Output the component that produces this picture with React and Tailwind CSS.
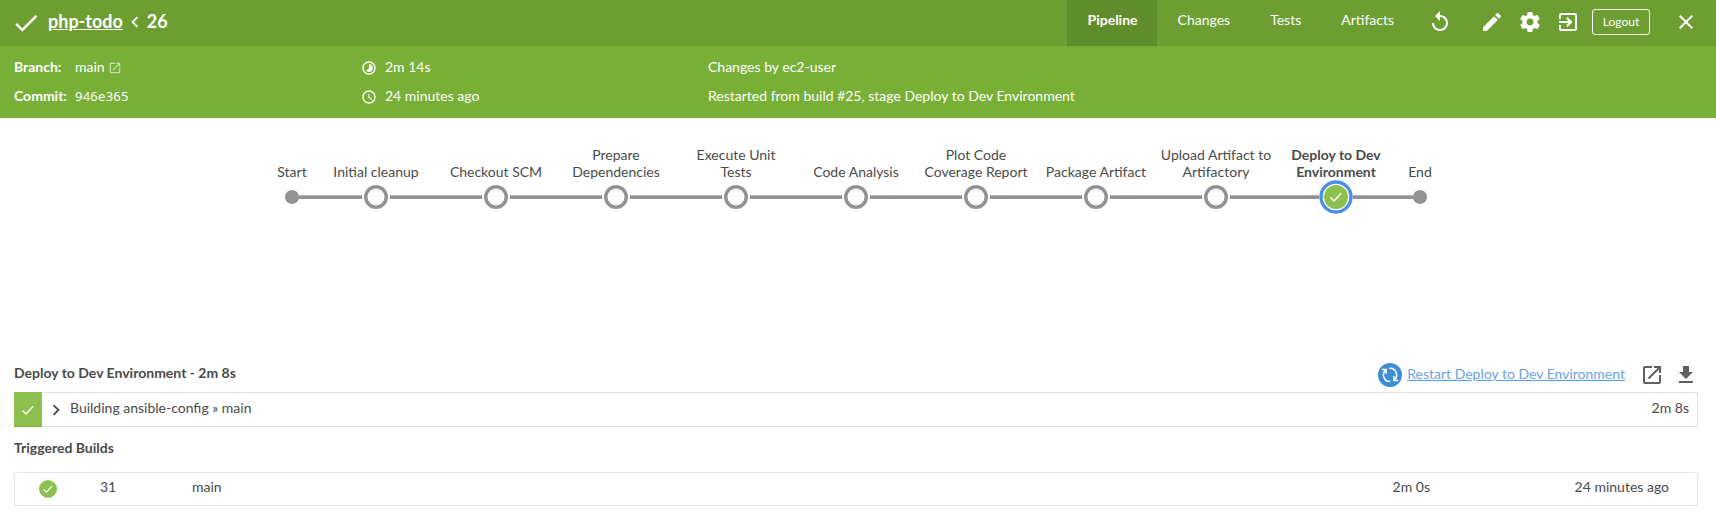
const ICONS = {
  replay: 'M12 5V1L7 6l5 5V7c3.31 0 6 2.69 6 6s-2.69 6-6 6-6-2.69-6-6H4c0 4.42 3.58 8 8 8s8-3.58 8-8-3.58-8-8-8z',
  edit: 'M3 17.25V21h3.75L17.81 9.94l-3.75-3.75L3 17.25zM20.71 7.04c.39-.39.39-1.02 0-1.41l-2.34-2.34c-.39-.39-1.02-.39-1.41 0l-1.83 1.83 3.75 3.75 1.83-1.83z',
  settings: 'M19.43 12.98c.04-.32.07-.64.07-.98s-.03-.66-.07-.98l2.11-1.65c.19-.15.24-.42.12-.64l-2-3.46c-.12-.22-.39-.3-.61-.22l-2.49 1c-.52-.4-1.08-.73-1.69-.98l-.38-2.65C14.46 2.18 14.25 2 14 2h-4c-.25 0-.46.18-.49.42l-.38 2.65c-.61.25-1.17.59-1.69.98l-2.49-1c-.23-.09-.49 0-.61.22l-2 3.46c-.13.22-.07.49.12.64l2.11 1.65c-.04.32-.07.65-.07.98s.03.66.07.98l-2.11 1.65c-.19.15-.24.42-.12.64l2 3.46c.12.22.39.3.61.22l2.49-1c.52.4 1.08.73 1.69.98l.38 2.65c.03.24.24.42.49.42h4c.25 0 .46-.18.49-.42l.38-2.65c.61-.25 1.17-.59 1.69-.98l2.49 1c.23.09.49 0 .61-.22l2-3.46c.12-.22.07-.49-.12-.64l-2.11-1.65zM12 15.5c-1.93 0-3.5-1.57-3.5-3.5s1.57-3.5 3.5-3.5 3.5 1.57 3.5 3.5-1.57 3.5-3.5 3.5z',
  exit: 'M10.09 15.59L11.5 17l5-5-5-5-1.41 1.41L12.67 11H3v2h9.67l-2.58 2.59zM19 3H5c-1.11 0-2 .9-2 2v4h2V5h14v14H5v-4H3v4c0 1.1.89 2 2 2h14c1.1 0 2-.9 2-2V5c0-1.1-.9-2-2-2z',
  close: 'M19 6.41L17.59 5 12 10.59 6.41 5 5 6.41 10.59 12 5 17.59 6.41 19 12 13.41 17.59 19 19 17.59 13.41 12z',
  open: 'M19 19H5V5h7V3H5c-1.11 0-2 .9-2 2v14c0 1.1.89 2 2 2h14c1.1 0 2-.9 2-2v-7h-2v7zM14 3v2h3.59l-9.83 9.83 1.41 1.41L19 6.41V10h2V3h-7z',
  download: 'M19 9h-4V3H9v6H5l7 7 7-7zM5 18v2h14v-2H5z',
  chevronRight: 'M10 6L8.59 7.41 13.17 12l-4.58 4.59L10 18l6-6z',
  chevronLeft: 'M15.41 7.41L14 6l-6 6 6 6 1.41-1.41L10.83 12z',
  check: 'M9 16.17L4.83 12l-1.42 1.41L9 19 21 7l-1.41-1.41z',
  clock: 'M11.99 2C6.47 2 2 6.48 2 12s4.47 10 9.99 10C17.52 22 22 17.52 22 12S17.52 2 11.99 2zM12 20c-4.42 0-8-3.58-8-8s3.58-8 8-8 8 3.58 8 8-3.58 8-8 8zm.5-13H11v6l5.25 3.15.75-1.23-4.5-2.67z',
  timelapse: 'M16.24 7.76C15.07 6.59 13.54 6 12 6v6l-4.24 4.24c2.34 2.34 6.14 2.34 8.49 0 2.34-2.34 2.34-6.14-.01-8.48zM12 2C6.48 2 2 6.48 2 12s4.48 10 10 10 10-4.48 10-10S17.52 2 12 2zm0 18c-4.42 0-8-3.58-8-8s3.58-8 8-8 8 3.58 8 8-3.58 8-8 8z',
};

function Icon({ name, className }) {
  return (
    <svg viewBox="0 0 24 24" fill="currentColor" className={`shrink-0 ${className}`}>
      <path d={ICONS[name]} />
    </svg>
  );
}

const TABS = [
  { label: 'Pipeline', active: true },
  { label: 'Changes' },
  { label: 'Tests' },
  { label: 'Artifacts' },
];

const STAGES = [
  ['Initial cleanup'],
  ['Checkout SCM'],
  ['Prepare', 'Dependencies'],
  ['Execute Unit', 'Tests'],
  ['Code Analysis'],
  ['Plot Code', 'Coverage Report'],
  ['Package Artifact'],
  ['Upload Artifact to', 'Artifactory'],
];

function Line({ hidden }) {
  return <div className={`h-1 flex-1 ${hidden ? '' : 'border-t border-[#b0b0b0] bg-[#949393]'}`} />;
}

function Stage({ lines, bold, width, first, last, children }) {
  return (
    <div className={`flex flex-col items-center ${width}`}>
      <div className={`flex h-[34px] flex-col justify-end text-center leading-[17px] whitespace-nowrap ${bold ? 'font-bold' : ''}`}>
        {lines.map((l) => (
          <div key={l}>{l}</div>
        ))}
      </div>
      <div className="flex h-[34px] w-full items-center">
        <Line hidden={first} />
        {children}
        <Line hidden={last} />
      </div>
    </div>
  );
}

const Dot = () => <div className="size-[14px] rounded-full bg-[#949393]" />;

export default function App() {
  return (
    <div className="h-[525px] w-[1716px] overflow-hidden bg-white font-['Lato',sans-serif] text-[14px] leading-[20px] text-[#4a4a4a]">
      <header className="flex h-[46px] items-center bg-[#6c9e32] text-white">
        <Icon name="check" className="ml-[11px] size-[30px]" />
        <div className="ml-[7px] flex items-center pb-[5px] text-[18px] font-bold">
          <a className="underline">php-todo</a>
          <Icon name="chevronLeft" className="mt-[2px] ml-px size-[22px]" />
          <span className="ml-px">26</span>
        </div>
        <nav className="ml-auto flex h-full">
          {TABS.map((t) => (
            <a key={t.label} className={`flex h-full items-center pr-[19px] pb-[7px] pl-[21px] ${t.active ? 'bg-[#608d2c] font-bold' : ''}`}>
              {t.label}
            </a>
          ))}
        </nav>
        <div className="flex w-[303px] items-center">
          <Icon name="replay" className="-mt-[2px] ml-[15px] size-6" />
          <Icon name="edit" className="-mt-[2px] ml-[28px] size-6" />
          <Icon name="settings" className="-mt-[2px] ml-[14px] size-6" />
          <Icon name="exit" className="-mt-[2px] ml-[14px] size-6" />
          <button className="-mt-[2px] ml-[12px] h-[26px] w-[58px] rounded-[3px] border border-white pb-px text-[12px] leading-[20px]">Logout</button>
          <Icon name="close" className="-mt-[2px] ml-[24px] size-6" />
        </div>
      </header>

      <section className="grid h-[72px] grid-cols-[347px_347px_1fr] content-center gap-y-[9px] bg-[#78b037] pb-[2px] pl-[14px] text-white">
        <div className="flex items-center">
          <span className="w-[61px] font-bold">Branch:</span>
          <span>main</span>
          <Icon name="open" className="mt-[2px] ml-[3px] size-[14px] opacity-60" />
        </div>
        <div className="flex items-center">
          <Icon name="timelapse" className="mt-[2px] size-4" />
          <span className="ml-2">2m 14s</span>
        </div>
        <div>Changes by ec2-user</div>
        <div className="flex items-center">
          <span className="w-[61px] font-bold">Commit:</span>
          <span className="font-['Noto_Sans',sans-serif] text-[13px] tracking-[0.25px]">946e365</span>
        </div>
        <div className="flex items-center">
          <Icon name="clock" className="mt-[2px] size-4" />
          <span className="ml-2">24 minutes ago</span>
        </div>
        <div>Restarted from build #25, stage Deploy to Dev Environment</div>
      </section>

      <section className="flex h-[242px] items-start pt-[28px] pl-[268px]">
        <Stage lines={['Start']} width="w-[48px]" first>
          <Dot />
        </Stage>
        {STAGES.map((lines) => (
          <Stage key={lines[0]} lines={lines} width="w-[120px]">
            <svg viewBox="0 0 24 24" className="mx-[2px] size-6 shrink-0">
              <circle cx="12" cy="12" r="10.25" fill="#fff" stroke="#949393" strokeWidth="3.5" />
            </svg>
          </Stage>
        ))}
        <Stage lines={['Deploy to Dev', 'Environment']} width="w-[120px]" bold>
          <svg viewBox="0 0 34 34" className="size-[34px] shrink-0">
            <circle cx="17" cy="17" r="15" fill="#fff" stroke="#4a90e2" strokeWidth="3.4" />
            <circle cx="17" cy="17" r="12" fill="#8cc04f" />
            <path d="M11.5 17.6l3.6 3.4 7.2-7.8" fill="none" stroke="#fff" strokeWidth="1.4" />
          </svg>
        </Stage>
        <Stage lines={['End']} width="w-[48px]" last>
          <Dot />
        </Stage>
      </section>

      <main className="mr-[18px] ml-[14px]">
        <div className="flex h-[32px] items-center">
          <h2 className="pb-[7px] font-bold">Deploy to Dev Environment - 2m 8s</h2>
          <svg viewBox="0 0 24 24" className="mt-[-2px] ml-auto size-6">
            <circle cx="12" cy="12" r="12" fill="#3b8dd6" />
            <g fill="none" stroke="#fff" strokeWidth="1.5">
              <path d="M3.8 6.6h4.4v4.4" />
              <path d="M8 6.8A6.6 6.6 0 0 0 12.3 18.6" />
              <path d="M20.2 17.4h-4.4v-4.4" />
              <path d="M16 17.2A6.6 6.6 0 0 0 11.2 5.4" />
            </g>
          </svg>
          <a className="ml-[5px] pb-[4px] text-[#69a3e8] underline decoration-[#5a9be6] underline-offset-1">Restart Deploy to Dev Environment</a>
          <Icon name="open" className="mt-[-2px] ml-[15px] size-6 text-[#606060]" />
          <Icon name="download" className="mt-[-2px] ml-[10px] size-6 text-[#606060]" />
        </div>
        <div className="flex h-[35px] items-center border border-l-0 border-[#e0e2e2]">
          <div className="-my-px flex h-[35px] w-7 shrink-0 items-center justify-center border-b border-[#78b037] bg-[#8cc04f]">
            <svg viewBox="0 0 14 14" className="mt-[2px] size-[14px]">
              <path d="M1.5 7.5l3.6 3.4 7.2-7.8" fill="none" stroke="#fff" strokeWidth="1.4" />
            </svg>
          </div>
          <Icon name="chevronRight" className="ml-[3px] size-[22px]" />
          <span className="ml-[3px] pb-[3px]">Building ansible-config » main</span>
          <span className="mr-2 ml-auto pb-[3px]">2m 8s</span>
        </div>
        <h3 className="mt-[11px] font-bold">Triggered Builds</h3>
        <div className="mt-[14px] flex h-[34px] items-center rounded-[3px] border border-[#e4e6ee]">
          <svg viewBox="0 0 18 18" className="ml-[24px] size-[18px]">
            <circle cx="9" cy="9" r="9" fill="#8cc04f" />
            <path d="M4.5 9.4l2.9 2.7 5.8-6.2" fill="none" stroke="#fff" strokeWidth="1.2" />
          </svg>
          <span className="ml-[43px] w-[92px] pb-[5px]">31</span>
          <span className="pb-[5px]">main</span>
          <span className="ml-auto w-[182px] pb-[5px]">2m 0s</span>
          <span className="mr-[28px] pb-[5px]">24 minutes ago</span>
        </div>
      </main>
    </div>
  );
}
